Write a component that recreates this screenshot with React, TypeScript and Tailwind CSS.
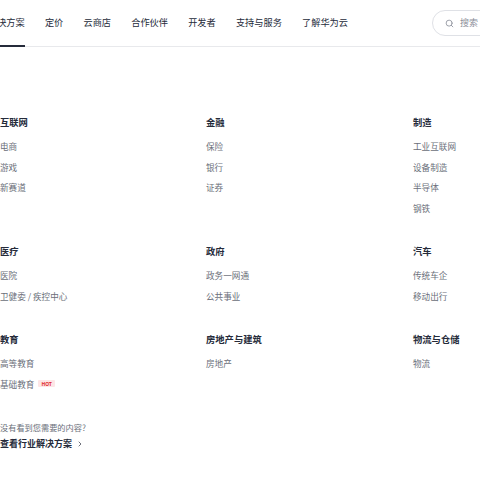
import { Search, ChevronRight } from "lucide-react";

interface Group {
  title: string;
  items: { name: string; hot?: boolean }[];
}

const nav = ["解决方案", "定价", "云商店", "合作伙伴", "开发者", "支持与服务", "了解华为云"];

const groups: Group[] = [
  { title: "互联网", items: [{ name: "电商" }, { name: "游戏" }, { name: "新赛道" }] },
  { title: "金融", items: [{ name: "保险" }, { name: "银行" }, { name: "证券" }] },
  { title: "制造", items: [{ name: "工业互联网" }, { name: "设备制造" }, { name: "半导体" }, { name: "钢铁" }] },
  { title: "医疗", items: [{ name: "医院" }, { name: "卫健委 / 疾控中心" }] },
  { title: "政府", items: [{ name: "政务一网通" }, { name: "公共事业" }] },
  { title: "汽车", items: [{ name: "传统车企" }, { name: "移动出行" }] },
  { title: "教育", items: [{ name: "高等教育" }, { name: "基础教育", hot: true }] },
  { title: "房地产与建筑", items: [{ name: "房地产" }] },
  { title: "物流与仓储", items: [{ name: "物流" }] },
];

export default function App() {
  return (
    <div className="w-[480px] h-[480px] overflow-hidden bg-white font-['Noto_Sans_CJK_SC','Noto_Sans',sans-serif]">
      <header className="h-[47px] border-b border-[#e8e9ec] flex items-start">
        <nav className="flex gap-[20.2px] ml-[-12px] h-full">
          {nav.map((n, i) => (
            <div key={n} className="relative h-full flex items-center text-[9.2px] leading-[14px] text-[#252b3a] whitespace-nowrap pb-[3px]">
              {n}
              {i === 0 && <span className="absolute left-0 right-0 bottom-[-1px] h-[2px] bg-[#252b3a]" />}
            </div>
          ))}
        </nav>
        <div className="ml-auto mt-[10px] mr-[-40px] w-[88px] h-[26px] rounded-full border border-[#dfe1e6] flex items-center pl-[12px] gap-[6px] text-[9px] text-[#8a8e99]">
          <Search className="w-[9px] h-[9px]" strokeWidth={2.2} />
          <span>搜索</span>
        </div>
      </header>
      <main className="pt-[68px]">
        <div className="grid grid-cols-[206px_207px_1fr] gap-y-[29.5px]">
          {groups.map((g) => (
            <div key={g.title} className="flex flex-col">
              <div className="text-[9.3px] leading-[14px] font-bold text-[#252b3a]">{g.title}</div>
              <ul className="mt-[10px] flex flex-col gap-[6.5px]">
                {g.items.map((it) => (
                  <li key={it.name} className="flex items-center gap-[4px] text-[8.6px] leading-[14px] text-[#6b6f7a] whitespace-nowrap">
                    {it.name}
                    {it.hot && (
                      <span className="bg-[#fde6e6] text-[#e02d2d] text-[5px] leading-[7px] font-bold px-[3px] rounded-[1px]">HOT</span>
                    )}
                  </li>
                ))}
              </ul>
            </div>
          ))}
        </div>
        <div className="mt-[29px] text-[8.2px] leading-[14px] text-[#6b6f7a]">没有看到您需要的内容?</div>
        <a className="mt-[3px] flex items-center gap-[4px] text-[9px] leading-[14px] font-bold text-[#252b3a]">
          查看行业解决方案
          <ChevronRight className="w-[8px] h-[8px]" strokeWidth={2} />
        </a>
      </main>
    </div>
  );
}
